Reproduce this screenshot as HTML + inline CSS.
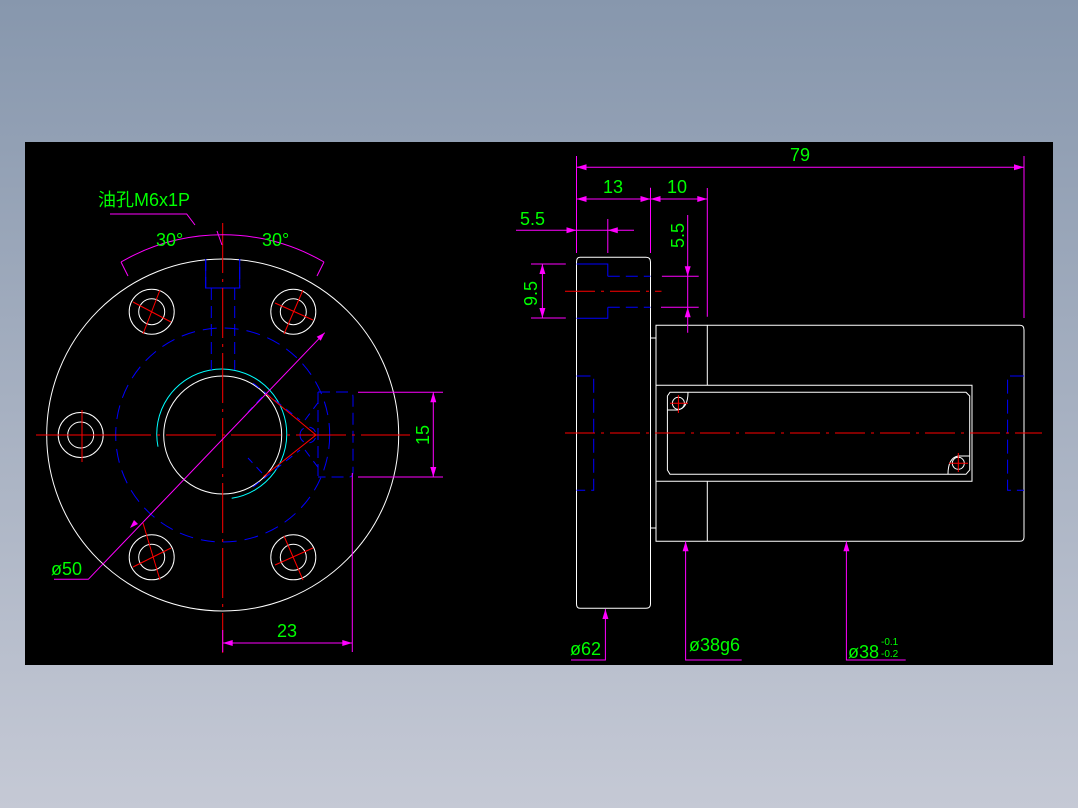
<!DOCTYPE html>
<html><head><style>
html,body{margin:0;padding:0;width:1078px;height:808px;overflow:hidden;background:linear-gradient(#8797ad,#c5c9d5);}
svg{position:absolute;left:0;top:0}
text{font-family:"Liberation Sans","Noto Sans CJK SC",sans-serif;fill:#00ff00}
</style></head><body>
<svg width="1078" height="808" viewBox="0 0 1078 808">
<rect x="25" y="142" width="1028" height="523" fill="#000"/>
<g fill="none" stroke-width="1">
<g stroke="#fff">
<circle cx="222.7" cy="435" r="176"/>
<circle cx="222.7" cy="435" r="59"/>
<circle cx="151.7" cy="311.7" r="22.5"/><circle cx="151.7" cy="311.7" r="13"/>
<circle cx="293.3" cy="311.7" r="22.5"/><circle cx="293.3" cy="311.7" r="13"/>
<circle cx="151.7" cy="557.3" r="22.5"/><circle cx="151.7" cy="557.3" r="13"/>
<circle cx="293.3" cy="557.3" r="22.5"/><circle cx="293.3" cy="557.3" r="13"/>
<circle cx="80.7" cy="435" r="22.5"/><circle cx="80.7" cy="435" r="13"/>
</g>
<path d="M158,446.7 A65,65 0 1 1 231.7,498.3" stroke="#00ffff"/>
<g stroke="#0000ff">
<circle cx="222.7" cy="435" r="107" stroke-dasharray="14,8"/>
<path d="M205.7,259 V288 H239.7 V259 M211.3,288 V370 M234.7,288 V370" stroke-dasharray="12,6"/>
<path d="M205.7,259 V288 H239.7 V259"/>
<path d="M318,392 H349 Q353,392 353,397 V472 Q353,477 349,477 H318 M318,392 V477" stroke-dasharray="12,6"/>
<path d="M253,383 L300,420 M253,487 L300,450 M262,397 L248,412 M262,473 L248,458 M305,420 L320,400 M305,450 L320,470 M300,435 a8,8 0 1 0 16,0 a8,8 0 1 0 -16,0" stroke-dasharray="8,6"/>
</g>
<g stroke="#ff0000">
<path d="M222.7,223 V653" stroke-dasharray="50,6,3,6"/>
<path d="M36,435 H410" stroke-dasharray="50,6,3,6"/>
<path d="M266.3,394 L316,435 L263.3,476.7"/>
<path d="M133,302 L171,322 M160,290 L143,334 M275,303 L313,320 M303,290 L284,334 M133,567 L171,548 M160,580 L143,523 M275,565 L313,548 M303,580 L284,536 M82,410 V462 M57,435 H105"/>
</g>
<g stroke="#ff00ff">
<path d="M324.7,332.7 L88.3,579.3 H54"/>
<path d="M110,214 H186.7 L195,225"/>
<path d="M121,262 A203,203 0 0 1 324,262"/>
<path d="M121,262 L128,276 M324,262 L317,276 M217,231 L222,245"/>
<path d="M222.7,643 H352.3 M352.3,473 V652 M358,392.3 H443 M358,477 H443 M433.3,392.3 V477 M222.7,630 V652"/>
</g>
<g fill="#ff00ff">
<path d="M222.7,643 l10,-3 v6z M352.3,643 l-10,-3 v6z M433.3,392.3 l-3,10 h6z M433.3,477 l-3,-10 h6z M324.7,332.7 l-8,4 l4,4z M130,528 l8,-4 l-4,-4z"/>
</g>
<g stroke="#fff">
<path d="M580,257.3 H646 Q650.5,257.3 650.5,262 V604 Q650.5,608.3 646,608.3 H580 Q576.5,608.3 576.5,604 V262 Q576.5,257.3 580,257.3Z"/>
<path d="M656,325.3 H1020 Q1024,325.3 1024,330 V537 Q1024,541.3 1020,541.3 H656Z"/>
<path d="M650.5,338 H656 M650.5,528 H656 M707.3,325.3 V385.3 M707.3,481.3 V541.3"/>
<path d="M656,385.3 H972 V481.3 H656"/>
<path d="M670,392.3 H966 L969.7,396 V470 L966,474.3 H670 L667.4,470 V396Z"/>
<circle cx="678.4" cy="403.3" r="6"/><circle cx="958.3" cy="463.3" r="6"/>
<path d="M667.4,410 H678 Q688,408 688,392.3 M969.7,456 H958 Q948,458 948,474.3"/>
</g>
<g stroke="#0000ff">
<path d="M576.5,376 H593.7 V490.3 H576.5 M1024,376 H1007.6 V490.3 H1024" stroke-dasharray="14,6"/>
<path d="M576.5,264 H607.8 V276.3 M607.8,307.3 V318.3 H576.5"/>
<path d="M607.8,276.3 H650.5 M607.8,307.3 H650.5" stroke-dasharray="12,6"/>
</g>
<g stroke="#ff0000">
<path d="M565,291.3 H661.5" stroke-dasharray="30,6,3,6"/>
<path d="M565,433 H1042" stroke-dasharray="30,6,3,6"/>
<path d="M678.4,395 V413 M670,403.3 H688 M958.3,453 V472 M949,463.3 H968"/>
</g>
<g stroke="#ff00ff">
<path d="M576.5,156 V253 M1024,156 V318 M576.5,167.3 H1024"/>
<path d="M650.5,187.7 V253 M707.3,188 V316.7 M576.5,199 H707.3"/>
<path d="M516,230.3 H634 M607.8,219 V253"/>
<path d="M687.7,215 V332.7 M661.9,276.3 H698.7 M661,307.3 H698.7"/>
<path d="M542.4,264 V318 M531,264 H565.8 M531,318 H565.8"/>
<path d="M605.4,609 V660 H571 M685.6,541.3 V660 H741.7 M846.4,541.3 V660 H905.7"/>
</g>
<g fill="#ff00ff">
<path d="M576.5,167.3 l10,-3 v6z M1024,167.3 l-10,-3 v6z M576.5,199 l10,-3 v6z M650.5,199 l-10,-3 v6z M650.5,199 l10,-3 v6z M707.3,199 l-10,-3 v6z M576.5,230.3 l-10,-3 v6z M607.8,230.3 l10,-3 v6z M687.7,276.3 l-3,-10 h6z M687.7,307.3 l-3,10 h6z M542.4,264 l-3,10 h6z M542.4,318 l-3,-10 h6z M605.4,609 l-3,10 h6z M685.6,541.3 l-3,10 h6z M846.4,541.3 l-3,10 h6z"/>
</g>
</g>
<g style="font-size:18px">
<text x="98" y="206">油孔M6x1P</text>
<text x="156" y="246">30°</text>
<text x="262" y="246">30°</text>
<text x="51" y="575">ø50</text>
<text x="277" y="637">23</text>
<text transform="translate(429,445) rotate(-90)">15</text>
<text x="790" y="161">79</text>
<text x="603" y="193">13</text>
<text x="667" y="193">10</text>
<text x="520" y="225">5.5</text>
<text transform="translate(684,248) rotate(-90)">5.5</text>
<text transform="translate(537,306) rotate(-90)">9.5</text>
<text x="570" y="655">ø62</text>
<text x="689" y="651">ø38g6</text>
<text x="848" y="658">ø38</text>
</g>
<text x="881" y="645" style="font-size:10px">-0.1</text>
<text x="881" y="657" style="font-size:10px">-0.2</text>
</svg>
</body></html>
